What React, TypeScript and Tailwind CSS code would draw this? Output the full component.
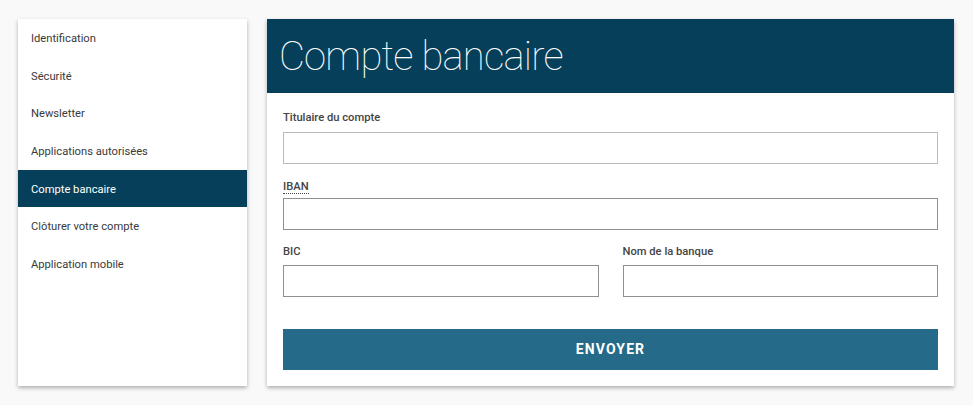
const menu = [
  'Identification',
  'Sécurité',
  'Newsletter',
  'Applications autorisées',
  'Compte bancaire',
  'Clôturer votre compte',
  'Application mobile',
];

export default function App() {
  const active = 'Compte bancaire';

  return (
    <div className="min-h-[405px] bg-[#f9f9f9] px-[18px] py-[19px] font-['Roboto',sans-serif]">
      <div className="flex gap-5 items-stretch">
        {/* Sidebar */}
        <nav className="w-[229px] h-[367px] bg-white shadow-[0_2px_4px_rgba(0,0,0,0.3)]">
          {menu.map((item) => (
            <div
              key={item}
              className={`h-[37.7px] flex items-center pl-[13px] pt-[3px] text-[11.2px] ${
                item === active ? 'bg-[#063f5a] text-white' : 'text-[#3a3a3a]'
              }`}
            >
              {item}
            </div>
          ))}
        </nav>

        {/* Main */}
        <div className="w-[687px] h-[367px] bg-white shadow-[0_2px_4px_rgba(0,0,0,0.3)]">
          <div className="h-[74px] bg-[#063f5a] flex items-center px-[12px]">
            <h1 className="text-[40px] font-thin text-white leading-none tracking-[-0.8px] pt-[2px]">Compte bancaire</h1>
          </div>
          <div className="px-4 pt-[18px]">
            <label className="block text-[11.2px] font-medium text-[#444] leading-[14px] mb-[7px]">Titulaire du compte</label>
            <div className="h-[32px] border border-[#bcbcbc]" />

            <label className="block text-[11.2px] font-medium text-[#444] leading-[14px] mt-[16px] mb-[4px]">
              <abbr className="no-underline border-b border-dotted border-[#444] cursor-help" title="International Bank Account Number">IBAN</abbr>
            </label>
            <div className="h-[32px] border border-[#8f8f8f]" />

            <div className="grid grid-cols-2 gap-6 mt-[15px]">
              <div>
                <label className="block text-[11.2px] font-medium text-[#444] leading-[14px] mb-[6px]">BIC</label>
                <div className="h-[32px] border border-[#8f8f8f]" />
              </div>
              <div>
                <label className="block text-[11.2px] font-medium text-[#444] leading-[14px] mb-[6px]">Nom de la banque</label>
                <div className="h-[32px] border border-[#8f8f8f]" />
              </div>
            </div>

            <button className="mt-[32px] w-full h-[41px] bg-[#256b89] text-white text-[14px] font-bold tracking-[1.1px]">
              ENVOYER
            </button>
          </div>
        </div>
      </div>
    </div>
  );
}
